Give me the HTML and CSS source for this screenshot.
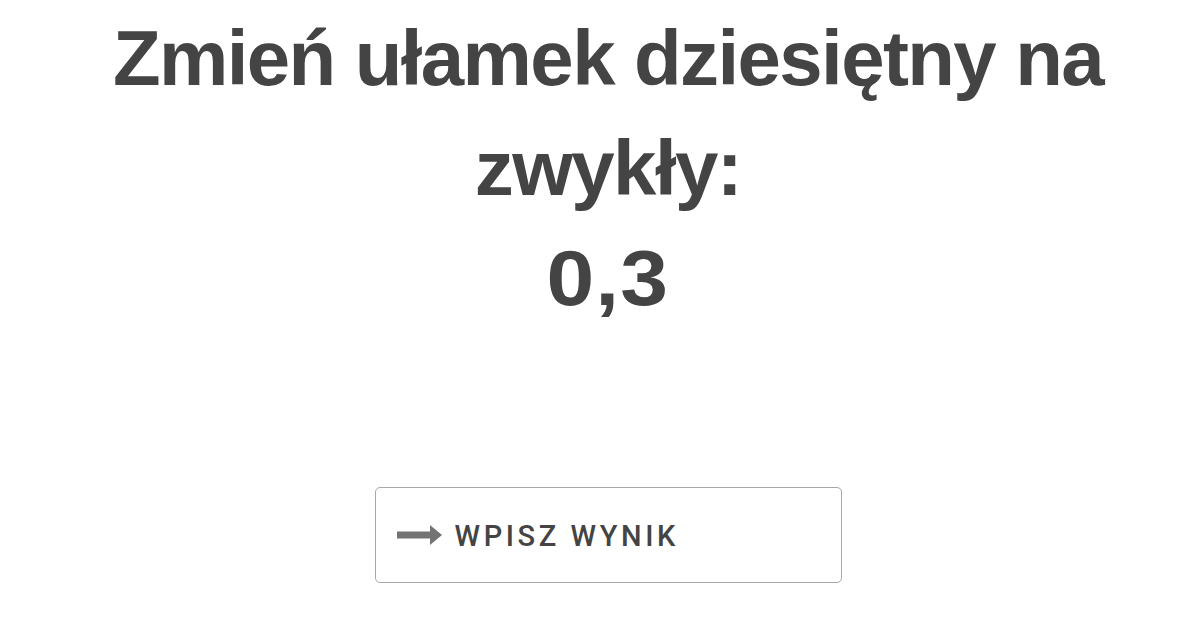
FILE: index.html
```html
<!DOCTYPE html>
<html lang="pl">
<head>
<meta charset="utf-8">
<link rel="stylesheet" href="styles.css">
</head>
<body>
<main class="page">
  <h1 class="question">Zmień ułamek dziesiętny na zwykły:<br><span class="number">0,3</span></h1>
  <button class="answer-btn" type="button">
    <svg class="arrow" width="45" height="22" viewBox="0 0 45 22" aria-hidden="true">
      <rect x="0" y="7.5" width="34" height="7" fill="#737373"/>
      <polygon points="33,1 45,11 33,21" fill="#737373"/>
    </svg>
    <span class="label">WPISZ WYNIK</span>
  </button>
</main>
</body>
</html>
```

FILE: styles.css
```css
html, body {
  margin: 0;
  padding: 0;
  background: #ffffff;
}
.page {
  width: 1200px;
  height: 630px;
  box-sizing: border-box;
  padding-left: 16px;
  display: flex;
  flex-direction: column;
  align-items: center;
  font-family: "Liberation Sans", Arial, sans-serif;
}
.question {
  margin: 3px 0 0 0;
  width: 1040px;
  text-align: center;
  font-size: 78px;
  line-height: 110px;
  font-weight: 700;
  letter-spacing: -1.6px;
  color: #444444;
}
.number {
  display: inline-block;
  letter-spacing: 1px;
  transform: scaleX(1.1);
}
.answer-btn {
  margin-top: 154px;
  width: 467px;
  height: 96px;
  box-sizing: border-box;
  border: 1.5px solid #a8a8a8;
  border-radius: 5px;
  background: #ffffff;
  display: flex;
  align-items: center;
  padding: 0 0 0 21px;
  gap: 13px;
  cursor: pointer;
}
.arrow {
  display: block;
}
.label {
  font-family: Roboto, "Liberation Sans", Arial, sans-serif;
  font-size: 29px;
  letter-spacing: 3.6px;
  color: #444444;
  font-weight: 500;
  padding-top: 2px;
}
```
